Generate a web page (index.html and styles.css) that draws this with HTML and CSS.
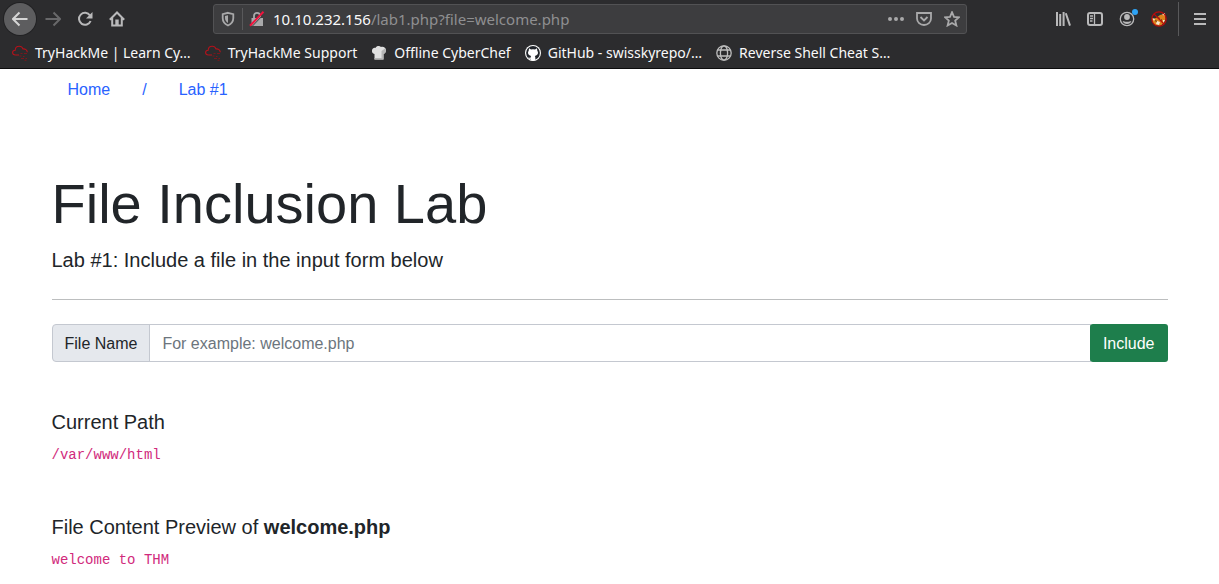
FILE: index.html
```html
<!DOCTYPE html>
<html lang="en">
<head>
<meta charset="utf-8">
<title>File Inclusion Lab</title>
<link rel="stylesheet" href="styles.css">
</head>
<body>
<svg class="defs" aria-hidden="true">
  <symbol id="thm" viewBox="0 0 16 16">
    <path d="M7 10H3.5C1.800 10 .6 9 .6 7.600S1.700 5.200 3.200 5.200C3.300 3 5 1.300 7.200 1.300c1.800 0 3.200 1 3.700 2.600 2.300-.4 4.300 1.200 4.400 3.300" fill="none" stroke="#b5121b" stroke-width="1.100"/>
    <path d="M8.500 8.500h2M12 8.500h3M7.500 11h2M11 11.500h1.500M9 13.500h3M13.500 13.500h1.500M12.500 15.300h2" stroke="#7a171c" stroke-width="1.100"/>
  </symbol>
</svg>
<header class="browser">
  <div class="toolbar">
    <button class="tool back" aria-label="Back"><svg viewBox="0 0 16 16"><path d="M15.500 8H1M7.500 1.500L1 8l6.500 6.500"/></svg></button>
    <button class="tool forward" aria-label="Forward"><svg viewBox="0 0 16 16"><path d="M.5 8H15M8.500 1.500L15 8l-6.500 6.500"/></svg></button>
    <button class="tool" aria-label="Reload"><svg viewBox="0 0 16 16"><path d="M13 4.500A6 6 0 1 0 13.600 10"/><path class="solid" d="M15.500 1v6.500H9z"/></svg></button>
    <button class="tool" aria-label="Home"><svg viewBox="0 0 16 16"><path d="M.8 8.700L8 1.500l7.200 7.200M3.200 7v7.500h9.600V7"/><path class="solid" d="M6.300 8.500h3.400V14H6.300z"/></svg></button>
    <div class="urlbar">
      <button class="mini shield" aria-label="Tracking protection"><svg viewBox="0 0 16 16"><path d="M8 1.800l5.300 1.300v4c0 3.400-2.100 6-5.300 7.400-3.200-1.400-5.300-4-5.300-7.400v-4z"/><path class="solid" d="M8 4.200v7.800c-2-1.200-3-3-3-5V5z"/></svg></button>
      <button class="mini lock" aria-label="Connection not secure"><svg viewBox="0 0 16 16"><path d="M5 7.500V4.800a3 3 0 0 1 6 0v2.700"/><path class="solid" d="M2.500 7h11.500v8H2.500z"/><path class="cut" d="M2.500 16L16 2"/><path class="strike" d="M1 14.800L14.500.8"/></svg></button>
      <div class="address" role="textbox" aria-label="Address" contenteditable="true" spellcheck="false"><span class="host">10.10.232.156</span>/lab1.php?file=welcome.php</div>
      <button class="mini" aria-label="Page actions"><svg viewBox="0 0 16 16"><path class="solid" d="M4 8a2 2 0 1 1-4 0 2 2 0 0 1 4 0zM10 8a2 2 0 1 1-4 0 2 2 0 0 1 4 0zM16 8a2 2 0 1 1-4 0 2 2 0 0 1 4 0z"/></svg></button>
      <button class="mini" aria-label="Save to Pocket"><svg viewBox="0 0 16 16"><path d="M1 2h14v5.500a7 6.500 0 0 1-14 0z"/><path d="M4.500 6L8 9.500 11.500 6"/></svg></button>
      <button class="mini" aria-label="Bookmark this page"><svg viewBox="0 0 16 16"><path d="M8 1.200l2 4.600 5 .5-3.800 3.300 1.200 4.900L8 12l-4.400 2.500 1.200-4.900L1 6.300l5-.5z"/></svg></button>
    </div>
    <button class="tool" aria-label="Library"><svg viewBox="0 0 16 16"><path d="M2 1v14M5.200 3v12M8.600 1v14M10.800 2.300l4.200 12.300"/></svg></button>
    <button class="tool" aria-label="Sidebar"><svg viewBox="0 0 16 16"><rect x="1" y="2" width="14" height="12" rx="2"/><path class="thin" d="M7.500 2v12M3 5h3M3 7.500h3M3 10h2.500"/></svg></button>
    <button class="tool account" aria-label="Account"><svg viewBox="0 0 16 16"><circle class="thin" cx="8" cy="8" r="6.700"/><circle class="solid" cx="8" cy="6" r="2.900"/><path class="solid" d="M3.600 10c1.500.5 2 .8 4.400.8s2.900-.3 4.400-.8c-.5 2-2.200 3-4.400 3s-3.900-1-4.400-3z"/></svg><span class="dot"></span></button>
    <button class="tool" aria-label="FoxyProxy"><svg viewBox="0 0 16 16"><g stroke="none"><path d="M1 8l4-1 4-3 4-1 1-1 .5 6-1.500 4-4 3-5-1-2.500-3z" fill="#dc841c"/><path d="M1 7l3 1-1 2zM11 3l3-1-.5 3zM6 10l3 1-1 3-3-1zM12 9l2 0-2 3z" fill="#f5e5cf"/><path d="M7 6l2 1-1 1zM10 8l1 1-1 1zM4 9l2 1-1 1z" fill="#342018"/></g><circle cx="8" cy="8" r="7.200" stroke="#b90b0b" stroke-width="1.200"/><path d="M3 3l10 10" stroke="#b90b0b" stroke-width="1.200"/></svg></button>
    <button class="tool menu" aria-label="Open menu"><svg viewBox="0 0 16 16"><path d="M2 3h12M2 8h12M2 13h12"/></svg></button>
  </div>
  <nav class="bookmarks" aria-label="Bookmarks">
    <a href="#"><svg><use href="#thm"/></svg><span>TryHackMe | Learn Cy…</span></a>
    <a href="#"><svg><use href="#thm"/></svg><span>TryHackMe Support</span></a>
    <a href="#"><svg viewBox="0 0 16 16"><path d="M3.500 14.500V9C1.500 8.800.8 7 1 5.500 1.200 3.500 3 2.500 4.500 3 5.500.800 8.500.500 10 2c2-.8 5 .3 5 3.300 0 2-1 3.300-2.500 3.700v5.500z" fill="#e0e0e0"/><path d="M3.500 13h9v1.500h-9zM10.500 6v7h2V9C15 8 15.500 5 14 3.500z" fill="#b4b4b4"/></svg><span>Offline CyberChef</span></a>
    <a href="#"><svg viewBox="0 0 16 16"><circle cx="8" cy="8" r="8" fill="#fff"/><circle cx="8" cy="8" r="6.900" fill="#20242a"/><path d="M4 3.200l2 1.200a8 8 0 0 1 4 0l2-1.200.3 2.500c1.600 2.500.3 5-2.500 5.300.5.600.6 1 .6 4.200a7 7 0 0 1-4.800 0v-1.500c-1.600.2-2-.5-2.600-1.500 1 .2 1.200.9 2.600.6 0-.8.100-1.200.6-1.800-2.800-.3-4.100-2.800-2.500-5.300z" fill="#fff"/></svg><span>GitHub - swisskyrepo/…</span></a>
    <a href="#"><svg viewBox="0 0 16 16"><g fill="none" stroke="#bdbdbd" stroke-width="1.300"><circle cx="8" cy="8" r="7.200"/><ellipse cx="8" cy="8" rx="3.600" ry="7.200"/><path d="M1.500 5h13M1.500 11h13"/></g></svg><span>Reverse Shell Cheat S…</span></a>
  </nav>
</header>
<main class="container">
  <nav class="crumbs" aria-label="Breadcrumb"><a href="#">Home</a><a href="#">/</a><a href="#">Lab #1</a></nav>
  <section class="intro">
    <h1>File Inclusion Lab</h1>
    <p>Lab #1: Include a file in the input form below</p>
  </section>
  <form class="group">
    <label for="file">File Name</label>
    <input id="file" type="text" placeholder="For example: welcome.php">
    <button type="submit">Include</button>
  </form>
  <section class="result"><h2>Current Path</h2><code>/var/www/html</code></section>
  <section class="result"><h2>File Content Preview of <strong>welcome.php</strong></h2><code>welcome to THM</code></section>
</main>
</body>
</html>
```

FILE: styles.css
```css
*, *::before, *::after { box-sizing: border-box; }
html { overflow: hidden; }
body {
  margin: 0;
  background: #fff;
  color: #212529;
  font: 16px/24px "Liberation Sans", Arial, sans-serif;
}
button { font: inherit; border: 0; padding: 0; cursor: pointer; }
a { text-decoration: none; }
.defs { display: none; }

.browser {
  background: #2c2c2e;
  border-bottom: 1px solid #0c0c0d;
  color: #f9f9fa;
  font: 15px/20px "Noto Sans", "Open Sans", sans-serif;
}
.toolbar { display: flex; align-items: center; height: 38px; padding: 0 3px 0 4px; }
.browser svg { display: block; flex: none; width: 16px; height: 16px; }
.toolbar svg { fill: none; stroke: #b9b9ba; stroke-width: 2; }
.toolbar svg .solid { fill: #b9b9ba; stroke: none; }
.toolbar svg .thin { stroke-width: 1.3; }
.tool {
  position: relative;
  display: grid;
  place-items: center;
  flex: none;
  width: 32px;
  height: 32px;
  background: none;
}
.back { margin-right: 1px; border-radius: 50%; background: #5d5d5f; box-shadow: 0 0 0 1px #222224; }
.back svg { stroke: #d5d5d5; }
.forward svg { stroke: #68686a; }
.dot {
  position: absolute;
  top: 6px;
  right: 5px;
  width: 6px;
  height: 6px;
  border-radius: 50%;
  background: #2ea3f5;
}
.menu { width: 38px; height: 34px; margin-left: 3px; border-left: 1px solid #59595b; padding-left: 4px; }

.urlbar {
  display: flex;
  flex: 1;
  align-items: center;
  min-width: 0;
  height: 30px;
  margin: 0 80px;
  border: 1px solid #525254;
  border-radius: 3px;
  background: #3d3d3f;
}
.mini { display: grid; place-items: center; flex: none; width: 28px; height: 28px; background: none; }
.mini svg { stroke-width: 1.8; }
.urlbar .mini svg { stroke: #a9a9aa; }
.urlbar .mini .solid { fill: #a9a9aa; stroke: none; }
.shield { height: 22px; border-right: 1px solid #59595b; width: 29px; }
.urlbar .lock .cut { stroke: #3d3d3f; stroke-width: 1; }
.urlbar .lock .strike { stroke: #f0123c; stroke-width: 2; }
.address { flex: 1; min-width: 0; margin-left: 2px; overflow: hidden; white-space: nowrap; color: #8f8f91; outline: 0; }
.host { color: #f9f9fa; }

.bookmarks { display: flex; align-items: center; gap: 14px; height: 30px; padding: 0 12px; overflow: hidden; font-size: 14px; }
.bookmarks a { display: flex; align-items: center; gap: 7px; color: inherit; white-space: nowrap; }

.container { max-width: 1140px; margin: 0 auto; padding: 0 12px; }
.crumbs { display: flex; }
.crumbs a { padding: 9px 16px 7px; color: #2962ff; }
.intro { margin: 61px 0 24px; padding-bottom: 24px; border-bottom: 1px solid #bcbebf; }
h1 { margin: 0 0 8px; font-size: 56px; line-height: 67px; font-weight: 400; }
.intro p { margin: 0; font-size: 20px; line-height: 30px; }
.group { display: flex; }
.group label {
  padding: 7px 12px 5px;
  border: 1px solid #c4c8d0;
  border-radius: 4px 0 0 4px;
  background: #e5e8ed;
}
.group input {
  flex: 1;
  min-width: 0;
  margin-left: -1px;
  padding: 7px 12px 5px;
  border: 1px solid #c4c8d0;
  border-radius: 0;
  background: #fff;
  color: inherit;
  font: inherit;
}
.group input::placeholder { color: #6c757d; opacity: 1; }
.group button { margin-left: -1px; padding: 8px 13px 6px; border-radius: 3px; background: #1e7e4c; color: #fff; }
.result { margin-top: 48px; }
.result h2 { margin: 0 0 8px; font-size: 20px; line-height: 24px; font-weight: 400; }
.result code { display: block; padding-top: 1px; color: #d12a7c; font: 14px/24px "Liberation Mono", monospace; }
```
